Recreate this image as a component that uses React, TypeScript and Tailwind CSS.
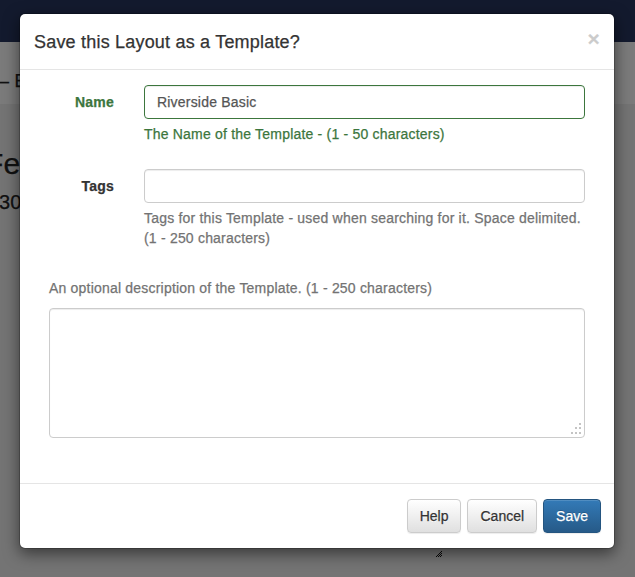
import React from "react";

const font = { fontFamily: '"Liberation Sans", Arial, sans-serif' };

function GripDots() {
  return (
    <svg width="12" height="12" viewBox="0 0 12 12" className="absolute right-[2px] bottom-[2px]">
      <rect x="9" y="0" width="2" height="2" fill="#c4c4c4" />
      <rect x="5" y="4" width="2" height="2" fill="#c4c4c4" />
      <rect x="9" y="4" width="2" height="2" fill="#c4c4c4" />
      <rect x="1" y="9" width="2" height="2" fill="#c4c4c4" />
      <rect x="5" y="9" width="2" height="2" fill="#c4c4c4" />
      <rect x="9" y="9" width="2" height="2" fill="#c4c4c4" />
    </svg>
  );
}

const btnDefault =
  "h-[34px] rounded-[4px] border border-[#ccc] bg-gradient-to-b from-white to-[#e0e0e0] px-[12px] leading-[20px] tracking-normal text-[#333] shadow-[inset_0_1px_0_rgba(255,255,255,0.15),0_1px_1px_rgba(0,0,0,0.075)] [text-shadow:0_1px_0_#fff]";

export default function App() {
  return (
    <div
      className="relative h-[577px] w-[635px] overflow-hidden bg-[#e8e8e8] text-[14px] tracking-[0.2px] [-webkit-text-stroke:0.25px]"
      style={font}
    >
      {/* underlying page */}
      <div className="flex flex-col">
        <div className="h-[42px] bg-[#26345c]" />
        <div className="flex h-[62px] items-center bg-[#f6f6f6]">
          <span className="-ml-[1px] mt-[17px] whitespace-nowrap text-[18px] text-[#222]">– Basic layout</span>
        </div>
        <div className="flex flex-col pt-[40px] text-[#222]">
          <span className="-ml-[15px] whitespace-nowrap text-[30px] leading-[40px]">Festival</span>
          <span className="-ml-[1px] mt-[5px] whitespace-nowrap text-[20px] leading-[26px]">30 items</span>
        </div>
        <div className="ml-[436px] mt-[336px] h-[6px] w-[6px]">
          <svg width="6" height="6" viewBox="0 0 6 6">
            <path d="M6 0 L0 6 M6 2 L2 6 M6 4 L4 6" stroke="#111" strokeWidth="1" />
          </svg>
        </div>
      </div>

      {/* backdrop */}
      <div className="absolute inset-0 bg-black/50" />

      {/* modal */}
      <div className="absolute inset-0 flex items-start pl-[19px] pt-[13px]">
        <div className="w-[596px] rounded-[6px] border border-black/20 bg-white bg-clip-padding shadow-[0_5px_15px_rgba(0,0,0,0.5)]">
          {/* header */}
          <div className="flex items-start justify-between border-b border-[#e5e5e5] px-[14px] pb-[14px] pt-[15px]">
            <h4 className="text-[18px] leading-[26px] text-[#333]">Save this Layout as a Template?</h4>
            <button className="-mt-[3px] text-[21px] font-bold leading-[26px] text-black opacity-20 [text-shadow:0_1px_0_#fff]">
              ×
            </button>
          </div>

          {/* body */}
          <div className="px-[14px] pb-[45px] pt-[15px]">
            <div className="mb-[15px] flex">
              <div className="w-[95px] px-[15px] pt-[7px] text-right">
                <label className="text-[14px] font-bold leading-[20px] text-[#3c763d]">Name</label>
              </div>
              <div className="flex-1 px-[15px]">
                <div className="flex h-[34px] items-center rounded-[4px] border border-[#3c763d] px-[12px] text-[#555] shadow-[inset_0_1px_1px_rgba(0,0,0,0.075)]">
                  Riverside Basic
                </div>
                <p className="mb-[10px] mt-[5px] leading-[20px] text-[#3c763d]">
                  The Name of the Template - (1 - 50 characters)
                </p>
              </div>
            </div>

            <div className="mb-[15px] flex">
              <div className="w-[95px] px-[15px] pt-[7px] text-right">
                <label className="text-[14px] font-bold leading-[20px] text-[#333]">Tags</label>
              </div>
              <div className="flex-1 px-[15px]">
                <div className="h-[34px] rounded-[4px] border border-[#ccc] shadow-[inset_0_1px_1px_rgba(0,0,0,0.075)]" />
                <p className="mb-[10px] mt-[5px] leading-[20px] text-[#737373]">
                  <span className="whitespace-nowrap">Tags for this Template - used when searching for it. Space delimited.</span>
                  <br />
                  (1 - 250 characters)
                </p>
              </div>
            </div>

            <div className="px-[15px] pt-[5px]">
              <p className="mb-[10px] leading-[20px] text-[#737373]">
                An optional description of the Template. (1 - 250 characters)
              </p>
              <div className="relative h-[130px] rounded-[4px] border border-[#ccc] shadow-[inset_0_1px_1px_rgba(0,0,0,0.075)]">
                <GripDots />
              </div>
            </div>
          </div>

          {/* footer */}
          <div className="flex justify-end gap-[6px] border-t border-[#e5e5e5] p-[15px] pr-[13px]">
            <button className={btnDefault}>Help</button>
            <button className={btnDefault}>Cancel</button>
            <button className="h-[34px] rounded-[4px] border border-[#245580] bg-gradient-to-b from-[#337ab7] to-[#265a88] px-[12px] leading-[20px] tracking-normal text-white shadow-[inset_0_1px_0_rgba(255,255,255,0.15),0_1px_1px_rgba(0,0,0,0.075)] [text-shadow:0_-1px_0_rgba(0,0,0,0.2)]">
              Save
            </button>
          </div>
        </div>
      </div>
    </div>
  );
}
